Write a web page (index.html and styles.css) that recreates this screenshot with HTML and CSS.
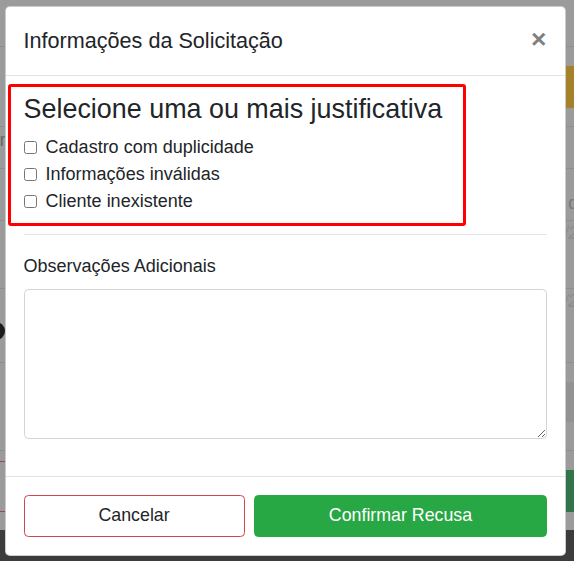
FILE: index.html
```html
<!DOCTYPE html>
<html lang="pt-BR">
<head>
<meta charset="utf-8">
<title>Informações da Solicitação</title>
<link rel="stylesheet" href="styles.css">
</head>
<body>
<div class="page">
  <div class="bg-row r1"></div>
  <div class="bg-row r2"><span></span><span class="blk gold"></span></div>
  <div class="bg-row r3"><span class="cut-text">or</span><span></span></div>
  <div class="bg-row r4"><span></span><span class="side-text">d</span></div>
  <div class="bg-row r5"><span></span><span class="side-text faint">/2</span></div>
  <div class="bg-row r6"><span class="dot"></span><span class="side-text faint">/2</span></div>
  <div class="bg-row r7"><span></span><span class="blk dim"></span></div>
  <div class="bg-row r8"><span class="outline-red"></span><span class="blk green"></span></div>
  <div class="bg-footer"></div>

  <div class="modal" role="dialog" aria-labelledby="modal-title">
    <div class="modal-header">
      <h5 class="modal-title" id="modal-title">Informações da Solicitação</h5>
      <button class="close" type="button" aria-label="Fechar">×</button>
    </div>
    <div class="modal-body">
      <div class="justify">
        <h4 class="justify-title">Selecione uma ou mais justificativa</h4>
        <label class="check"><input type="checkbox"> Cadastro com duplicidade</label>
        <label class="check"><input type="checkbox"> Informações inválidas</label>
        <label class="check"><input type="checkbox"> Cliente inexistente</label>
      </div>
      <hr class="divider">
      <label class="field-label" for="obs">Observações Adicionais</label>
      <textarea id="obs" class="field"></textarea>
    </div>
    <div class="modal-footer">
      <button class="btn btn-cancel" type="button">Cancelar</button>
      <button class="btn btn-confirm" type="button">Confirmar Recusa</button>
    </div>
  </div>
</div>
</body>
</html>
```
FILE: styles.css
```css
* { box-sizing: border-box; }
html, body { margin: 0; padding: 0; }
body {
  font-family: "Liberation Sans", Arial, sans-serif;
  color: #212529;
  background: #9b9b9b;
}
.page {
  position: relative;
  width: 574px;
  height: 561px;
  overflow: hidden;
  background: #9b9b9b;
  display: grid;
  grid-template-rows: 47px 80px 42px 52px 68px 74px 88px 79px 1fr;
}
.bg-row {
  border-bottom: 1px solid #8d8d8d;
  display: flex;
  justify-content: space-between;
  align-items: flex-start;
}
.r8 { border-bottom: 0; }
.bg-footer { background: #3c3c3c; }
.blk { width: 20px; }
.gold { background: #a5822a; height: 42px; margin-top: 19px; }
.dim { background: #929292; height: 40px; margin-top: 19px; }
.green { background: #31744a; height: 42px; margin-top: 19px; }
.outline-red {
  width: 30px; height: 51px; margin-top: 10px;
  border-top: 1px solid #a8414b; border-bottom: 1px solid #a8414b;
}
.dot {
  width: 18px; height: 18px; border-radius: 50%;
  background: #1c1c1c; margin: 33px 0 0 -13px;
}
.cut-text { font-size: 17.6px; color: #666; margin: 3px 0 0 -10px; }
.side-text { font-size: 17.6px; color: #7a7a7a; margin: 24px -4px 0 0; }
.side-text.faint { color: #8c8c8c; font-style: italic; margin-top: 2px; }

.modal {
  position: absolute;
  left: 5px;
  top: 6px;
  width: 561px;
  background: #fff;
  border: 1px solid rgba(0,0,0,.2);
  border-radius: 5px;
  display: flex;
  flex-direction: column;
}
.modal-header {
  height: 69px;
  padding: 0 17.6px 0 17.6px;
  border-bottom: 1px solid #e2e2e2;
  display: flex;
  align-items: center;
  justify-content: space-between;
}
.modal-title {
  margin: 0;
  font-size: 21.6px;
  font-weight: 400;
  line-height: 1.5;
  color: #212529;
}
.close {
  border: 0;
  background: transparent;
  padding: 0;
  font-family: "Liberation Sans", Arial, sans-serif;
  font-size: 26.4px;
  font-weight: 700;
  line-height: 1;
  color: #808080;
  margin-right: 1px;
  margin-top: -4px;
}
.modal-body {
  padding: 8px 17.6px 37px;
}
.justify {
  width: 458px;
  margin-left: -15.6px;
  border: 3px solid #ff0000;
  border-radius: 3px;
  padding: 6px 0 7.9px 12.6px;
}
.justify-title {
  margin: 0 0 8.8px;
  font-size: 26.9px;
  font-weight: 400;
  line-height: 1.2;
  color: #212529;
}
.check {
  display: flex;
  align-items: center;
  gap: 9px;
  font-size: 18px;
  line-height: 27px;
  color: #212529;
}
.check input {
  margin: 0;
  width: 13px;
  height: 13px;
}
.divider {
  margin: 8px 0 17.6px;
  border: 0;
  border-top: 1px solid #e5e5e5;
}
.field-label {
  display: block;
  font-size: 18px;
  line-height: 26.4px;
  margin-bottom: 10px;
  color: #212529;
}
.field {
  display: block;
  width: 100%;
  height: 150px;
  border: 1px solid #d2d5d8;
  border-radius: 4.4px;
  font-family: inherit;
  font-size: 17.6px;
  margin: 0;
}
.modal-footer {
  border-top: 1px solid #e2e2e2;
  padding: 18px 17.6px;
  display: grid;
  grid-template-columns: 221px 1fr;
  gap: 9px;
}
.btn {
  height: 42px;
  font-family: "Liberation Sans", Arial, sans-serif;
  font-size: 17.8px;
  border-radius: 4.4px;
  cursor: pointer;
}
.btn-cancel {
  background: #fff;
  color: #212529;
  border: 1px solid #d4414f;
}
.btn-confirm {
  background: #28a745;
  color: #fff;
  border: 1px solid #28a745;
}
```
